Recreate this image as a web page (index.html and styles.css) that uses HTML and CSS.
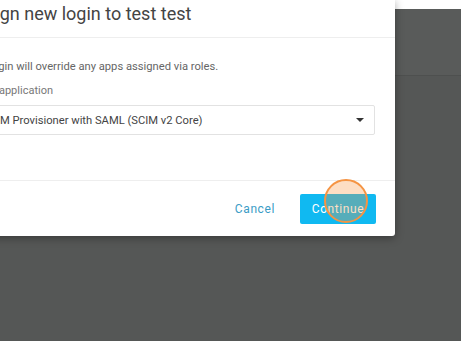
FILE: index.html
```html
<!DOCTYPE html>
<html lang="en">
<head>
  <meta charset="UTF-8">
  <title>Assign new login</title>
  <link rel="stylesheet" href="styles.css">
</head>
<body>
  <div class="modal">
    <div class="modal-header">
      <h3>Assign new login to test test</h3>
    </div>

    <div class="modal-body">
      <p class="note">This login will override any apps assigned via roles.</p>
      <label for="app">Select application</label>
      <div class="select">
        <span>SCIM Provisioner with SAML (SCIM v2 Core)</span>
        <span class="caret"></span>
      </div>
    </div>

    <div class="modal-footer">
      <button class="btn-link">Cancel</button>
      <button class="btn-primary">Continue</button>
      <span class="click"></span>
    </div>
  </div>
</body>
</html>
```

FILE: styles.css
```css
body {
  margin: 0;
  height: 341px;
  overflow: hidden;
  font-family: Roboto, "Noto Sans", sans-serif;
  background: linear-gradient(#fff 0 9px, #595b5a 9px 75px, #4e504f 75px 76px, #555756 76px);
}

.modal {
  width: 450px;
  margin-left: -55px;
  background: #fff;
  border-radius: 0 0 3px 0;
  box-shadow: 0 2px 8px rgba(0, 0, 0, 0.35);
}

.modal-header {
  height: 37px;
  padding: 0 20px;
  border-bottom: 1px solid #eee;
}

.modal-header h3 {
  margin: 0;
  padding-top: 3px;
  font-size: 18px;
  line-height: 21px;
  font-weight: 400;
  color: #444;
}

.modal-body {
  padding: 21px 20px 45px;
}

.note {
  margin: 0 0 10px;
  font-size: 11.2px;
  line-height: 15px;
  color: #666;
}

label {
  display: block;
  margin-bottom: 7px;
  padding-left: 1px;
  font-size: 11px;
  line-height: 14px;
  color: #777;
}

.select {
  display: flex;
  align-items: center;
  justify-content: space-between;
  height: 28px;
  padding: 0 10px 0 17px;
  border: 1px solid #e2e2e2;
  border-radius: 2px;
  font-size: 11.2px;
  color: #444;
}

.caret {
  width: 0;
  height: 0;
  border-left: 4px solid transparent;
  border-right: 4px solid transparent;
  border-top: 4px solid #333;
}

.modal-footer {
  position: relative;
  display: flex;
  justify-content: flex-end;
  align-items: center;
  gap: 17px;
  padding: 13px 19px 12px;
  border-top: 1px solid #eee;
}

.modal-footer button {
  font-family: Roboto, "Noto Sans", sans-serif;
  font-size: 12px;
  letter-spacing: 0.6px;
  height: 30px;
  border: none;
  border-radius: 2px;
  cursor: pointer;
}

.btn-link {
  background: none;
  color: #3b9cc6;
  letter-spacing: 0.2px;
  padding: 0 8px;
}

.btn-primary {
  width: 76px;
  background: #10b9f1;
  color: #fff;
}

.click {
  position: absolute;
  left: 379px;
  top: -2px;
  width: 40px;
  height: 40px;
  border: 2px solid #f59443;
  border-radius: 50%;
  background: rgba(247, 146, 58, 0.3);
}
```
